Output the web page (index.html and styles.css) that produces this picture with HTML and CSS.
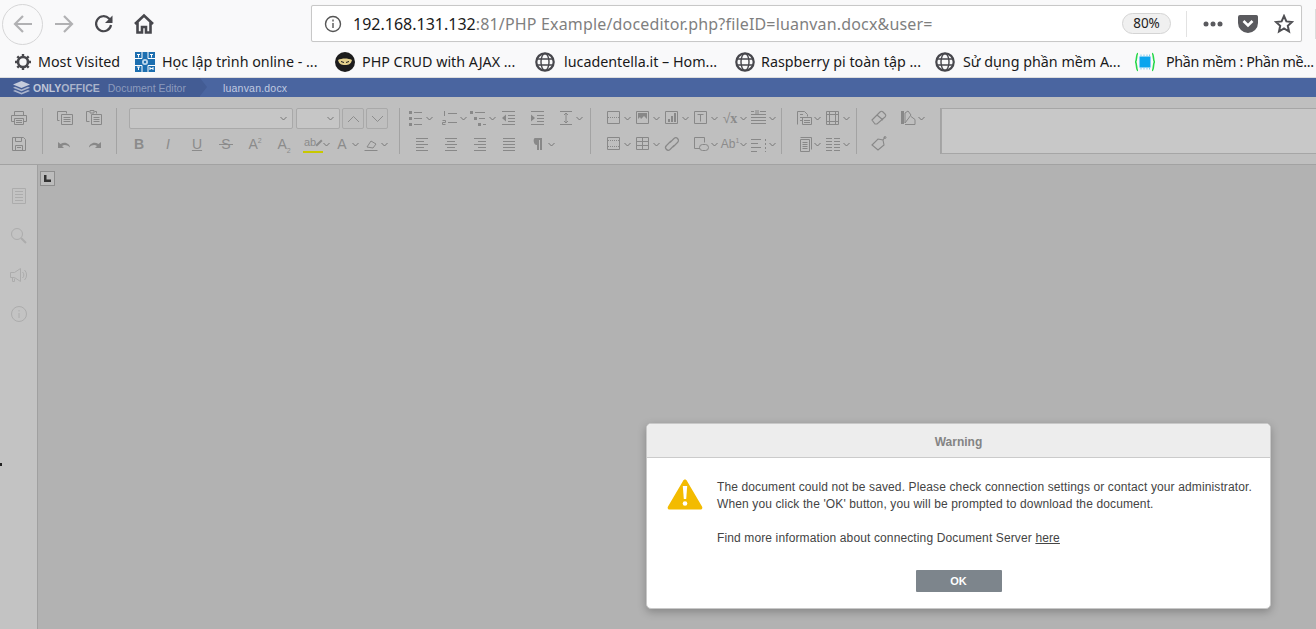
FILE: index.html
```html
<!DOCTYPE html>
<html lang="en">
<head>
    <meta charset="UTF-8">
    <title>luanvan.docx</title>
    <link rel="stylesheet" href="styles.css">
</head>
<body>
<svg class="defs" width="0" height="0">
    <defs>
        <symbol id="chev" viewBox="0 0 7 5"><path d="M.5 1l3 3 3-3"/></symbol>
        <symbol id="globe" viewBox="0 0 20 20"><circle cx="10" cy="10" r="8.7" stroke-width="2.2"/><ellipse cx="10" cy="10" rx="4" ry="8.5" stroke-width="1.4"/><path d="M2 7h16M2 13h16" stroke-width="1.4"/></symbol>
        <symbol id="print" viewBox="0 0 20 20"><path d="M5.500 7V3.500h9V7M5.500 13.500h-3v-6h15v6h-3M5.500 10.500h9v6h-9zM7 12.500h6M7 14.500h6"/></symbol>
        <symbol id="save" viewBox="0 0 20 20"><path d="M3.500 3.500h11l2 2v11h-13zM6.500 3.500v4h6v-4M6.500 16.500v-5h7v5M8 13.500h4"/></symbol>
        <symbol id="copy" viewBox="0 0 20 20"><path d="M4.500 12.500h-2v-9h9v2M6.500 6.500h11v10h-11zM8.500 9.500h7M8.500 11.500h7M8.500 13.500h7"/></symbol>
        <symbol id="paste" viewBox="0 0 20 20"><path d="M5.500 13.500h-3v-10h3M10.500 3.500h2v2M6 2.500h4v2.500H6zM7.500 6.500h10v10h-10zM9.500 9.500h6M9.500 11.500h6M9.500 13.500h6"/></symbol>
        <symbol id="undo" viewBox="0 0 20 20"><path class="solid" d="M3 8v6h6l-2-2c2-1.500 5-1.500 8 1.500 0-3-4.500-6.500-9.500-3.500z"/></symbol>
        <symbol id="redo" viewBox="0 0 20 20"><path class="solid" d="M17 8v6h-6l2-2c-2-1.500-5-1.500-8 1.500 0-3 4.500-6.500 9.500-3.500z"/></symbol>
        <symbol id="bullets" viewBox="0 0 20 20"><path class="solid" d="M3 3h3v3H3zM3 9h3v3H3zM3 15h3v3H3z"/><path d="M8 4.500h8M8 10.500h8M8 16.500h8"/></symbol>
        <symbol id="numbered" viewBox="0 0 20 20"><path d="M8 5.500h9M8 14.500h9M4.500 3v5M2.500 12.500h3v2h-3v2h3"/></symbol>
        <symbol id="multi" viewBox="0 0 20 20"><path class="solid" d="M1 3h3v3H1zM5 9h3v3H5zM9 15h3v3H9z"/><path d="M6 4.500h10M10 10.500h6M14 16.500h3"/></symbol>
        <symbol id="outdent" viewBox="0 0 20 20"><path d="M4 3.500h13M10 7.500h7M10 10.500h7M10 13.500h7M4 16.500h13"/><path class="solid" d="M8 6.500v7L4 10z"/></symbol>
        <symbol id="indent" viewBox="0 0 20 20"><path d="M4 3.500h13M10 7.500h7M10 10.500h7M10 13.500h7M4 16.500h13"/><path class="solid" d="M4 6.500v7L8 10z"/></symbol>
        <symbol id="spacing" viewBox="0 0 20 20"><path d="M4 3.500h12M4 16.500h12M10 5v10M8 7l2-2 2 2M8 13l2 2 2-2"/></symbol>
        <symbol id="align-l" viewBox="0 0 20 20"><path d="M4 4.500h12M4 7.500h8M4 10.500h12M4 13.500h8M4 16.500h12"/></symbol>
        <symbol id="align-c" viewBox="0 0 20 20"><path d="M4 4.500h12M6 7.500h8M4 10.500h12M6 13.500h8M4 16.500h12"/></symbol>
        <symbol id="align-r" viewBox="0 0 20 20"><path d="M4 4.500h12M8 7.500h8M4 10.500h12M8 13.500h8M4 16.500h12"/></symbol>
        <symbol id="align-j" viewBox="0 0 20 20"><path d="M4 4.500h12M4 7.500h12M4 10.500h12M4 13.500h12M4 16.500h12"/></symbol>
        <symbol id="para" viewBox="0 0 20 20"><path class="solid" d="M7 4h7v12h-2V6h-1v10H9v-5c-4 0-4-7-2-7z"/></symbol>
        <symbol id="pagebreak" viewBox="0 0 20 20"><path d="M3.500 3.500h12v12h-12z"/><path d="M4 9.500h11" stroke-dasharray="1 1"/></symbol>
        <symbol id="headerfooter" viewBox="0 0 20 20"><path d="M3.500 3.500h12v12h-12z"/><path d="M4 6.500h11M4 12.500h11" stroke-dasharray="1 1"/></symbol>
        <symbol id="picture" viewBox="0 0 20 20"><path d="M3.500 3.500h12v12h-12z"/><path class="solid" d="M5 5h9v6l-3-3-3 3-1-2-2 2z"/></symbol>
        <symbol id="chart" viewBox="0 0 20 20"><path d="M3.500 3.500h12v12h-12z"/><path class="solid" d="M6 11h2v3H6zM9 8h2v6H9zM12 5h2v9h-2z"/></symbol>
        <symbol id="table" viewBox="0 0 20 20"><path d="M3.500 3.500h12v12h-12zM3.500 7.500h12M3.500 11.500h12M9.500 3.500v12"/></symbol>
        <symbol id="link" viewBox="0 0 20 20"><path d="M9 7l-4.500 4.500a2.500 2.500 0 003.500 4L12 11.500M11 13l4.500-4.500a2.500 2.500 0 00-3.500-4L8 8.500" stroke-width="1.200"/></symbol>
        <symbol id="textbox" viewBox="0 0 20 20"><path d="M3.500 3.500h12v12h-12zM6.500 6.500h6M9.500 6.500v7"/></symbol>
        <symbol id="shape" viewBox="0 0 20 20"><path d="M9 14.500H3.500v-11h10v5"/><rect x="8.500" y="10.500" width="9" height="6" rx="3"/></symbol>
        <symbol id="dropcap" viewBox="0 0 20 20"><path d="M2 3.500h3M7 2v4M9 2v4M11 3.500h6M2 6.500h15M2 9.500h15M2 12.500h15M2 15.500h15"/></symbol>
        <symbol id="colalign" viewBox="0 0 20 20"><path d="M2 5.500h10M2 9.500h7M2 13.500h10M2 17.500h6"/><path d="M16.500 5v13" stroke-dasharray="2 2"/></symbol>
        <symbol id="wrap" viewBox="0 0 20 20"><path d="M3.500 16.500v-13h7l3 3v2M6 6.500h3M6 9.500h3M6 12.500h2M8.500 9.500h9v7h-9zM10 12.500h6M10 14.500h6"/></symbol>
        <symbol id="margins" viewBox="0 0 20 20"><path d="M3.500 3.500h12v13h-12zM6.500 3.500v13M12.500 3.500v13M3.500 6.500h12M3.500 13.500h12"/></symbol>
        <symbol id="pagesize" viewBox="0 0 20 20"><path d="M6.500 5.500h9v12h-9zM6.500 3.500h11v12M8.500 8.500h5M8.500 10.500h5M8.500 12.500h5M8.500 14.500h5"/></symbol>
        <symbol id="columns" viewBox="0 0 20 20"><path d="M3 4.500h6M11 4.500h6M3 7.500h6M11 7.500h6M3 10.500h6M11 10.500h6M3 13.500h6M11 13.500h6M3 16.500h6M11 16.500h6"/></symbol>
        <symbol id="eraser" viewBox="0 0 20 20"><path d="M3 12l8-8c1-1 2-1 3 0l2 2c1 1 1 2 0 3l-8 7H6zM8 7l6 5" stroke-width="1.100"/></symbol>
        <symbol id="colors" viewBox="0 0 20 20"><path class="solid" d="M3 3h3v13H3z"/><path d="M7 5l3-2 3 4-6 8zM7 16.500h10v-5l-4-3"/></symbol>
        <symbol id="paint" viewBox="0 0 20 20"><path d="M3 11l6-6 5 1 1 5-6 5zM14 6l2-3" stroke-width="1.100"/><circle cx="16" cy="3.500" r="1"/></symbol>
        <symbol id="side-page" viewBox="0 0 20 20"><path d="M3.500 1.500h13v15h-13zM6 4.500h8M6 7.500h8M6 10.500h8M6 13.500h8"/></symbol>
        <symbol id="side-search" viewBox="0 0 20 20"><circle cx="8" cy="8" r="5.500"/><path d="M12 12l5 5" stroke-width="2"/></symbol>
        <symbol id="side-speak" viewBox="0 0 20 20"><path d="M1.500 7.500h4l6-4v13l-6-4h-4zM3.500 12.500v4h2v-3M13.500 7a4 4 0 010 6M15.500 5a7 7 0 010 10"/></symbol>
        <symbol id="side-info" viewBox="0 0 20 20"><circle cx="10" cy="10" r="7.500"/><path d="M10 9v5M10 6v1.500"/></symbol>
    </defs>
</svg>

<div class="browser">
    <div class="nav">
        <div class="back">
            <svg width="22" height="22" viewBox="0 0 22 22"><path d="M20 11H3M11 3l-8 8 8 8"/></svg>
        </div>
        <div class="nav-btn forward">
            <svg width="22" height="22" viewBox="0 0 22 22"><path d="M2 11h17M11 3l8 8-8 8"/></svg>
        </div>
        <div class="nav-btn reload">
            <svg width="22" height="22" viewBox="0 0 22 22"><path d="M18 12a7.500 7.500 0 11-2-6.500L18.500 8"/><path class="fill" d="M19.500 2.500V10h-7.500z"/></svg>
        </div>
        <div class="nav-btn home">
            <svg width="22" height="22" viewBox="0 0 22 22"><path d="M2 11l9-8.500 9 8.500M4.500 9.500V19.500h4.500V14h4v5.500h4.500V9.500"/></svg>
        </div>
        <div class="urlbar">
            <svg class="info" width="18" height="18" viewBox="0 0 18 18"><circle cx="9" cy="9" r="7.500"/><path d="M9 8v5M9 4.500v2"/></svg>
            <div class="url"><span class="host">192.168.131.132</span>:81/PHP Example/doceditor.php?fileID=luanvan.docx&amp;user=</div>
            <div class="zoom-pill">80%</div>
            <div class="url-sep"></div>
            <svg class="dots" width="20" height="6" viewBox="0 0 20 6"><circle cx="3" cy="3" r="2.500"/><circle cx="10" cy="3" r="2.500"/><circle cx="17" cy="3" r="2.500"/></svg>
            <svg class="pocket" width="20" height="20" viewBox="0 0 20 20"><path d="M2.500 1h15A2 2 0 0120 3v6a10 10 0 01-20 0V3a2 2 0 012-2z"/><path class="notch" d="M5.500 7l4.500 4.500L14.500 7"/></svg>
            <svg class="star" width="20" height="20" viewBox="0 0 20 20"><path d="M10 2l2.400 5.400 5.600.6-4.200 3.800 1.200 5.700-5-3-5 3 1.200-5.700L2 8l5.600-.6z"/></svg>
        </div>
        <div class="nav-end"></div>
    </div>
    <div class="bookmarks">
        <div class="bm bm-first">
            <svg width="18" height="18" viewBox="0 0 18 18"><circle class="gear" cx="9" cy="9" r="5"/><path class="gear-teeth" d="M9 1v3M9 14v3M1 9h3M14 9h3M3.300 3.300l2.200 2.200M12.500 12.500l2.200 2.200M3.300 14.700l2.200-2.200M12.500 5.500l2.200-2.200"/></svg>
            Most Visited
        </div>
        <div class="bm">
            <svg width="20" height="20" viewBox="0 0 20 20"><rect width="20" height="20" fill="#1d6fb0"/><path d="M0 6.500h7V0M13 0v6.500h7M0 13.500h7V20M13 20v-6.500h7" stroke="#fff" fill="none"/><path d="M2 2.500h3M3.500 2.500v3M15 2.500h3M16.500 2.500v3M2 15h3M3.500 15v3M15 15v3M18 15v3M15 16.500h3" stroke="#fff" fill="none"/><circle cx="10" cy="10" r="3" fill="#bcd7ec"/><circle cx="10" cy="10" r="1.200" fill="#1d6fb0"/></svg>
            <span class="t7">Học lập trình online - ...</span>
        </div>
        <div class="bm">
            <svg width="20" height="20" viewBox="0 0 20 20"><circle cx="10" cy="10" r="10" fill="#1c1c1c"/><path d="M3 8c4-2 10-2 14 0-1 4-3 5-7 5s-6-1-7-5z" fill="#e3cf8b"/><path d="M6 9.500l3 1M14 9.500l-3 1" stroke="#1c1c1c" fill="none"/></svg>
            <span class="t7">PHP CRUD with AJAX ...</span>
        </div>
        <div class="bm">
            <svg class="ic-globe"><use href="#globe"/></svg>
            <span class="t9">lucadentella.it – Hom...</span>
        </div>
        <div class="bm">
            <svg class="ic-globe"><use href="#globe"/></svg>
            <span class="t6">Raspberry pi toàn tập ...</span>
        </div>
        <div class="bm">
            <svg class="ic-globe"><use href="#globe"/></svg>
            <span class="t8">Sử dụng phần mềm A...</span>
        </div>
        <div class="bm bm-last">
            <svg width="20" height="20" viewBox="0 0 20 20"><path d="M3 1.500C1 1.500 2 9 .5 10 2 11 1 18.500 3 18.500M17 1.500c2 0 1 7.500 2.500 8.500-1.500 1-.5 8.500-2.500 8.500" stroke="#27d84a" stroke-width="1.600" fill="none"/><rect x="4.500" y="4.500" width="11" height="11" fill="#0aa5ee"/><path d="M6 2.500v2M9 2.500v2M12 2.500v2M14.500 2.500v2M6 15.500v2M9 15.500v2M12 15.500v2M14.500 15.500v2" stroke="#7fc9ef" fill="none"/></svg>
            <span class="t11">Phần mềm : Phần mề...</span>
        </div>
    </div>
</div>

<div class="editor-head">
    <div class="brand">
        <svg width="17" height="14" viewBox="0 0 17 14"><path d="M8.500 0L17 3.500 8.500 7 0 3.500z" fill="#c5ccdc"/><path d="M2 5.800L0 6.800l8.500 3.500L17 6.800l-2-1-6.500 2.700zM2 9l-2 1 8.500 3.500L17 10l-2-1-6.500 2.700z" fill="#aab4cc"/></svg>
        <span class="brand-name">ONLY<span class="brand-light">OFFICE</span></span>
        <span class="brand-app">Document Editor</span>
    </div>
    <div class="doc-name">luanvan.docx</div>
</div>

<div class="toolbar">
    <div class="tb-group g1">
        <div class="tb-row">
            <div class="tb"><svg class="ic"><use href="#print"/></svg></div>
        </div>
        <div class="tb-row">
            <div class="tb"><svg class="ic"><use href="#save"/></svg></div>
        </div>
    </div>
    <div class="tb-group g2">
        <div class="tb-row">
            <div class="tb"><svg class="ic"><use href="#copy"/></svg></div>
            <div class="tb"><svg class="ic"><use href="#paste"/></svg></div>
        </div>
        <div class="tb-row">
            <div class="tb"><svg class="ic"><use href="#undo"/></svg></div>
            <div class="tb"><svg class="ic"><use href="#redo"/></svg></div>
        </div>
    </div>
    <div class="tb-group g3">
        <div class="tb-row font-row">
            <div class="combo combo-font"><svg class="chev"><use href="#chev"/></svg></div>
            <div class="combo combo-size"><svg class="chev"><use href="#chev"/></svg></div>
            <div class="size-btn"><svg width="13" height="8" viewBox="0 0 13 8"><path d="M1 7l5.500-5.500L12 7"/></svg></div>
            <div class="size-btn"><svg width="13" height="8" viewBox="0 0 13 8"><path d="M1 1l5.500 5.500L12 1"/></svg></div>
        </div>
        <div class="tb-row format-row">
            <div class="tb"><span class="glyph bold">B</span></div>
            <div class="tb"><span class="glyph italic">I</span></div>
            <div class="tb"><span class="glyph under">U</span></div>
            <div class="tb"><span class="glyph strike">S</span></div>
            <div class="tb"><span class="glyph">A<sup>2</sup></span></div>
            <div class="tb"><span class="glyph">A<sub>2</sub></span></div>
            <div class="tb"><span class="glyph hilite">ab</span><svg class="chev"><use href="#chev"/></svg></div>
            <div class="tb"><span class="glyph">A</span><svg class="chev"><use href="#chev"/></svg></div>
            <div class="tb"><svg class="ic" viewBox="0 0 20 20"><path d="M6 13l4-6 5 3-3 4zM3.500 16.500h13"/></svg><svg class="chev"><use href="#chev"/></svg></div>
        </div>
    </div>
    <div class="tb-group g4">
        <div class="tb-row">
            <div class="tb tb-wide"><svg class="ic"><use href="#bullets"/></svg><svg class="chev"><use href="#chev"/></svg></div>
            <div class="tb"><svg class="ic"><use href="#numbered"/></svg><svg class="chev"><use href="#chev"/></svg></div>
            <div class="tb"><svg class="ic"><use href="#multi"/></svg><svg class="chev"><use href="#chev"/></svg></div>
            <div class="tb"><svg class="ic"><use href="#outdent"/></svg></div>
            <div class="tb"><svg class="ic"><use href="#indent"/></svg></div>
            <div class="tb"><svg class="ic"><use href="#spacing"/></svg><svg class="chev"><use href="#chev"/></svg></div>
        </div>
        <div class="tb-row align-row">
            <div class="tb"><svg class="ic"><use href="#align-l"/></svg></div>
            <div class="tb"><svg class="ic"><use href="#align-c"/></svg></div>
            <div class="tb"><svg class="ic"><use href="#align-r"/></svg></div>
            <div class="tb"><svg class="ic"><use href="#align-j"/></svg></div>
            <div class="tb"><svg class="ic"><use href="#para"/></svg><svg class="chev"><use href="#chev"/></svg></div>
        </div>
    </div>
    <div class="tb-group g5">
        <div class="tb-row">
            <div class="tb"><svg class="ic"><use href="#pagebreak"/></svg><svg class="chev"><use href="#chev"/></svg></div>
            <div class="tb"><svg class="ic"><use href="#picture"/></svg><svg class="chev"><use href="#chev"/></svg></div>
            <div class="tb"><svg class="ic"><use href="#chart"/></svg><svg class="chev"><use href="#chev"/></svg></div>
            <div class="tb"><svg class="ic"><use href="#textbox"/></svg><svg class="chev"><use href="#chev"/></svg></div>
            <div class="tb"><span class="glyph formula">√<b>x</b></span><svg class="chev"><use href="#chev"/></svg></div>
            <div class="tb"><svg class="ic"><use href="#dropcap"/></svg><svg class="chev"><use href="#chev"/></svg></div>
        </div>
        <div class="tb-row">
            <div class="tb"><svg class="ic"><use href="#headerfooter"/></svg><svg class="chev"><use href="#chev"/></svg></div>
            <div class="tb"><svg class="ic"><use href="#table"/></svg><svg class="chev"><use href="#chev"/></svg></div>
            <div class="tb"><svg class="ic"><use href="#link"/></svg></div>
            <div class="tb"><svg class="ic"><use href="#shape"/></svg><svg class="chev"><use href="#chev"/></svg></div>
            <div class="tb"><span class="glyph glyph-ab">Ab<sup>1</sup></span><svg class="chev"><use href="#chev"/></svg></div>
            <div class="tb"><svg class="ic"><use href="#colalign"/></svg><svg class="chev"><use href="#chev"/></svg></div>
        </div>
    </div>
    <div class="tb-group g6">
        <div class="tb-row">
            <div class="tb"><svg class="ic"><use href="#wrap"/></svg><svg class="chev"><use href="#chev"/></svg></div>
            <div class="tb"><svg class="ic"><use href="#margins"/></svg><svg class="chev"><use href="#chev"/></svg></div>
        </div>
        <div class="tb-row">
            <div class="tb"><svg class="ic"><use href="#pagesize"/></svg><svg class="chev"><use href="#chev"/></svg></div>
            <div class="tb"><svg class="ic"><use href="#columns"/></svg><svg class="chev"><use href="#chev"/></svg></div>
        </div>
    </div>
    <div class="tb-group g7">
        <div class="tb-row">
            <div class="tb"><svg class="ic"><use href="#eraser"/></svg></div>
            <div class="tb"><svg class="ic"><use href="#colors"/></svg><svg class="chev"><use href="#chev"/></svg></div>
        </div>
        <div class="tb-row">
            <div class="tb"><svg class="ic"><use href="#paint"/></svg></div>
        </div>
    </div>
    <div class="styles-box"></div>
</div>

<div class="workspace">
    <div class="sidebar">
        <svg class="side-ic"><use href="#side-page"/></svg>
        <svg class="side-ic"><use href="#side-search"/></svg>
        <svg class="side-ic"><use href="#side-speak"/></svg>
        <svg class="side-ic"><use href="#side-info"/></svg>
    </div>
    <div class="canvas">
        <div class="ruler-corner"><svg width="9" height="9" viewBox="0 0 9 9"><path d="M1 1h2.500v4.500H8V8H1z"/></svg></div>
    </div>
</div>

<div class="edge-dot"></div>

<div class="dialog">
    <div class="dialog-head">Warning</div>
    <div class="dialog-body">
        <svg class="warn" width="36" height="32" viewBox="0 0 36 32">
            <path d="M18 1.500c1 0 1.500.5 2 1.500l15 25.500c.8 1.500.3 3-1.500 3h-31C.7 31.500.2 30 1 28.500L16 3c.5-1 1-1.500 2-1.500z" fill="#f3bb00"/>
            <path d="M15.800 8h4.400l-1 13h-2.400z" fill="#fff"/><circle cx="18" cy="25.500" r="2.300" fill="#fff"/>
        </svg>
        <div class="dialog-msg">
            The document could not be saved. Please check connection settings or contact your administrator.<br>
            When you click the 'OK' button, you will be prompted to download the document.<br>
            <br>
            Find more information about connecting Document Server <a href="#">here</a>
        </div>
    </div>
    <div class="dialog-foot"><button>OK</button></div>
</div>
</body>
</html>
```

FILE: styles.css
```css
html, body {
    height: 100%;
}

body {
    margin: 0;
    overflow: hidden;
    display: flex;
    flex-direction: column;
    height: 629px;
    background-color: #b2b2b2;
    font-family: "Liberation Sans", Arial, sans-serif;
}

.defs {
    position: absolute;
}

/* browser chrome */
.browser {
    background-color: #f9f9fa;
    font-family: "Noto Sans", sans-serif;
    color: #1a1a1a;
}

.nav {
    display: flex;
    height: 42px;
    align-items: center;
}

.back {
    box-sizing: border-box;
    width: 41px;
    height: 41px;
    margin: 6px 0 0 2px;
    border: 1px solid #d6d6d7;
    border-radius: 50%;
    display: flex;
    align-items: center;
    justify-content: center;
    flex-shrink: 0;
}

.back svg, .nav-btn svg {
    fill: none;
    stroke-width: 2.2;
}

.back svg, .forward svg {
    stroke: #b1b1b3;
}

.nav-btn {
    width: 40px;
    display: flex;
    justify-content: center;
    margin-top: 6px;
    flex-shrink: 0;
}

.forward {
    margin-left: 1px;
}

.reload svg, .home svg {
    stroke: #47474c;
}

.nav-btn.home svg {
    stroke-width: 2.600;
}

.reload svg .fill {
    fill: #47474c;
    stroke: none;
}

.urlbar {
    box-sizing: border-box;
    width: 991px;
    height: 37px;
    margin: 5px 0 0 147px;
    flex-shrink: 0;
    display: flex;
    align-items: center;
    background-color: #fff;
    border: 1px solid #c8c8c8;
    border-radius: 2px;
    box-shadow: 0 0 1px rgba(0, 0, 0, 0.1);
}

.info {
    margin-left: 12px;
    fill: none;
    stroke: #555;
    stroke-width: 1.400;
}

.url {
    margin-left: 11px;
    width: 769px;
    font-size: 16px;
    letter-spacing: 0.170px;
    color: #7f7f7f;
    white-space: nowrap;
}

.host {
    color: #1a1a1a;
    letter-spacing: 0;
}

.zoom-pill {
    box-sizing: border-box;
    width: 49px;
    height: 21px;
    line-height: 18px;
    text-align: center;
    font-size: 13.500px;
    color: #222;
    background-color: #f0f0f0;
    border: 1px solid #d4d4d4;
    border-radius: 11px;
}

.url-sep {
    width: 1px;
    height: 26px;
    margin-left: 15px;
    background-color: #e2e2e2;
}

.dots {
    margin-left: 16px;
    fill: #5a5a5e;
}

.pocket {
    margin-left: 15px;
    fill: #5a5a5e;
}

.pocket .notch {
    fill: none;
    stroke: #fff;
    stroke-width: 2.600;
}

.star {
    margin-left: 16px;
    fill: none;
    stroke: #4f4f53;
    stroke-width: 2;
}

.nav-end {
    width: 1px;
    height: 30px;
    margin: 5px 0 0 13px;
    background-color: #dcdcdc;
}

.bookmarks {
    display: flex;
    height: 36px;
    box-sizing: border-box;
    padding: 4px 0 0 14px;
    border-bottom: 1px solid #dedede;
    align-items: center;
    font-size: 14.300px;
    white-space: nowrap;
}

.bm {
    display: flex;
    align-items: center;
    width: 200px;
    flex-shrink: 0;
}

.bm svg {
    flex-shrink: 0;
}

.bm-first {
    width: 121px;
    gap: 6px;
}

.bm-last {
    width: 181px;
}

.gear {
    fill: none;
    stroke: #47474c;
    stroke-width: 2.600;
}

.gear-teeth {
    fill: none;
    stroke: #47474c;
    stroke-width: 2.400;
}

.ic-globe {
    width: 20px;
    height: 20px;
    fill: none;
    stroke: #47474c;
}

.t6 { margin-left: 6px; }
.t7 { margin-left: 7px; }
.t8 { margin-left: 8px; }
.t9 { margin-left: 9px; }
.t11 { margin-left: 11px; letter-spacing: -0.350px; }

/* editor header */
.editor-head {
    display: flex;
    height: 19px;
    flex-shrink: 0;
    align-items: center;
    background-color: #4a65a0;
    color: #b9c3d9;
    font-size: 11px;
    white-space: nowrap;
}

.brand {
    position: relative;
    display: flex;
    align-items: center;
    width: 187px;
    height: 19px;
    padding-left: 13px;
    background-color: #435c94;
}

.brand::after {
    content: "";
    position: absolute;
    left: 200px;
    top: 0;
    border-left: 7px solid #435c94;
    border-top: 9.500px solid transparent;
    border-bottom: 9.500px solid transparent;
}

.brand-name {
    margin-left: 3px;
    font-weight: bold;
    font-size: 10.500px;
    color: #c0c7d8;
}

.brand-light {
    color: #aab4cb;
}

.brand-app {
    margin-left: 8px;
    font-size: 10.500px;
    color: #8c9bbd;
}

.doc-name {
    margin-left: 23px;
    font-size: 10.500px;
    letter-spacing: 0.200px;
    color: #c1cbe0;
}

/* toolbar */
.toolbar {
    display: flex;
    flex-shrink: 0;
    height: 68px;
    box-sizing: border-box;
    padding-top: 11px;
    background-color: #bfbfbf;
    border-bottom: 1px solid #a2a2a2;
    color: #888;
}

.tb-group {
    box-sizing: border-box;
    height: 46px;
    border-right: 1px solid #a3a3a3;
    display: flex;
    flex-direction: column;
    gap: 6px;
}

.g1 { width: 43px; padding-left: 5px; }
.g2 { width: 74px; padding-left: 8px; }
.g3 { width: 283px; padding-left: 8px; }
.g4 { width: 191px; padding-left: 2px; }
.g5 { width: 191px; padding-left: 9px; }
.g6 { width: 75px; padding-left: 8px; }
.g7 { width: 84px; padding-left: 8px; }

.tb-row {
    display: flex;
    height: 20px;
}

.tb {
    box-sizing: border-box;
    width: 29px;
    height: 20px;
    padding-left: 4px;
    display: flex;
    align-items: center;
    flex-shrink: 0;
}

.tb-wide {
    width: 34px;
}

.align-row {
    padding-left: 6px;
}

.ic {
    width: 20px;
    height: 20px;
    flex-shrink: 0;
    fill: none;
    stroke: currentColor;
    stroke-width: 1;
}

.ic .solid, symbol .solid {
    fill: currentColor;
    stroke: none;
}

.chev {
    width: 7px;
    height: 5px;
    flex-shrink: 0;
    fill: none;
    stroke: #777;
}

.glyph {
    display: block;
    width: 20px;
    flex-shrink: 0;
    text-align: center;
    font-size: 14px;
    line-height: 16px;
    color: #8b8b8b;
}

.glyph sup, .glyph sub {
    font-size: 7px;
    line-height: 0;
}

.glyph-ab {
    font-size: 12px;
    white-space: nowrap;
}

.bold { font-weight: bold; }
.italic { font-style: italic; }
.under { text-decoration: underline; }

.strike {
    position: relative;
}

.strike::after {
    content: "";
    position: absolute;
    left: 3px;
    right: 3px;
    top: 8px;
    height: 1px;
    background-color: #8b8b8b;
}

.hilite {
    position: relative;
    box-sizing: border-box;
    height: 17px;
    font-size: 11px;
    line-height: 13px;
    text-align: left;
    padding-left: 1px;
    border-bottom: 2px solid #c8c800;
}

.hilite::after {
    content: "";
    position: absolute;
    right: 0;
    top: 6px;
    width: 8px;
    height: 2px;
    background-color: #8b8b8b;
    transform: rotate(-45deg);
}

.formula {
    font-size: 14px;
}

.formula b {
    font-family: "Liberation Serif", serif;
}

.font-row {
    padding-left: 4px;
    align-items: flex-start;
}

.combo {
    box-sizing: border-box;
    height: 21px;
    margin-right: 3px;
    padding-right: 5px;
    display: flex;
    align-items: center;
    justify-content: flex-end;
    background-color: #c6c6c6;
    border: 1px solid #a9a9a9;
    border-radius: 2px;
}

.combo-font { width: 164px; }
.combo-size { width: 44px; margin-right: 2px; }

.size-btn {
    box-sizing: border-box;
    width: 22px;
    height: 21px;
    margin-right: 2px;
    display: flex;
    align-items: center;
    justify-content: center;
    border: 1px solid #a9a9a9;
    border-radius: 2px;
}

.size-btn svg {
    fill: none;
    stroke: #8d8d8d;
}

.styles-box {
    box-sizing: border-box;
    flex: 1;
    height: 46px;
    background-color: #c8c8c8;
    border: 1px solid #a6a6a6;
    border-right: none;
}

/* workspace */
.workspace {
    flex: 1;
    display: flex;
}

.sidebar {
    box-sizing: border-box;
    width: 38px;
    padding-top: 22px;
    display: flex;
    flex-direction: column;
    align-items: center;
    gap: 19px;
    background-color: #c3c3c3;
    border-right: 1px solid #a0a0a0;
}

.side-ic {
    width: 20px;
    height: 20px;
    fill: none;
    stroke: #acacac;
    stroke-width: 1;
}

.canvas {
    flex: 1;
    padding: 6px 0 0 2px;
    background-color: #b2b2b2;
}

.ruler-corner {
    box-sizing: border-box;
    width: 15px;
    height: 15px;
    display: flex;
    align-items: center;
    justify-content: center;
    background-color: #bcbcbc;
    border: 1px solid #8e8e8e;
}

.ruler-corner svg {
    fill: #333;
}

.edge-dot {
    position: absolute;
    left: 0;
    top: 463px;
    width: 2px;
    height: 3px;
    background-color: #222;
}

/* warning dialog */
.dialog {
    position: absolute;
    left: 646px;
    top: 423px;
    box-sizing: border-box;
    width: 625px;
    height: 186px;
    background-color: #fff;
    border: 1px solid #c8c8c8;
    border-radius: 5px;
    box-shadow: 0 3px 9px rgba(0, 0, 0, 0.25);
    overflow: hidden;
}

.dialog-head {
    box-sizing: border-box;
    height: 34px;
    padding-top: 1px;
    line-height: 34px;
    text-align: center;
    font-size: 12px;
    font-weight: bold;
    color: #848484;
    background-color: #ededed;
    border-bottom: 1px solid #cbcbcb;
}

.dialog-body {
    display: flex;
    padding: 20px 0 0 20px;
}

.warn {
    flex-shrink: 0;
}

.dialog-msg {
    margin: 1px 0 0 14px;
    font-size: 12px;
    letter-spacing: 0.125px;
    line-height: 17px;
    color: #444;
    white-space: nowrap;
}

.dialog-msg a {
    color: #444;
}

.dialog-foot {
    display: flex;
    justify-content: center;
    margin-top: 23px;
}

button {
    width: 86px;
    height: 22px;
    padding: 0;
    border: none;
    border-radius: 1px;
    background-color: #7d858c;
    color: #fff;
    font-family: "Liberation Sans", Arial, sans-serif;
    font-size: 11px;
    font-weight: bold;
}
```
